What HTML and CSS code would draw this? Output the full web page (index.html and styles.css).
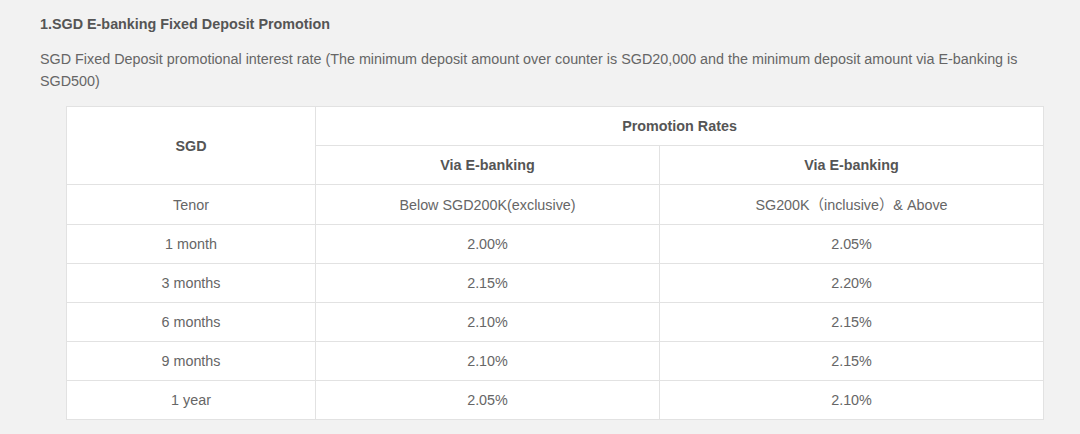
FILE: index.html
```html
<!DOCTYPE html>
<html>
<head>
<meta charset="utf-8">
<link rel="stylesheet" href="styles.css">
</head>
<body>
<div class="page">
  <h2 class="title">1.SGD E-banking Fixed Deposit Promotion</h2>
  <p class="desc">SGD Fixed Deposit promotional interest rate (The minimum deposit amount over counter is SGD20,000 and the minimum deposit amount via E-banking is SGD500)</p>
  <table class="rates">
    <colgroup>
      <col class="c1">
      <col class="c2">
      <col class="c3">
    </colgroup>
    <tr>
      <th rowspan="2">SGD</th>
      <th colspan="2">Promotion Rates</th>
    </tr>
    <tr>
      <th>Via E-banking</th>
      <th>Via E-banking</th>
    </tr>
    <tr class="tall"><td>Tenor</td><td>Below SGD200K(exclusive)</td><td>SG200K（inclusive）&amp; Above</td></tr>
    <tr><td>1 month</td><td>2.00%</td><td>2.05%</td></tr>
    <tr><td>3 months</td><td>2.15%</td><td>2.20%</td></tr>
    <tr><td>6 months</td><td>2.10%</td><td>2.15%</td></tr>
    <tr><td>9 months</td><td>2.10%</td><td>2.15%</td></tr>
    <tr><td>1 year</td><td>2.05%</td><td>2.10%</td></tr>
  </table>
</div>
</body>
</html>
```

FILE: styles.css
```css
html, body {
  margin: 0;
  padding: 0;
  background: #f2f2f2;
}
body {
  font-family: "Liberation Sans", Arial, "Noto Sans CJK SC", sans-serif;
  font-size: 14.35px;
  color: #666;
}
.page {
  padding: 13px 40px 0 40px;
  width: 1000px;
}
.title {
  margin: 0 0 13px 0;
  font-size: 14.35px;
  line-height: 22px;
  font-weight: bold;
  color: #555;
}
.desc {
  margin: 0 0 14px 0;
  line-height: 22px;
  color: #666;
  width: 990px;
}
.rates {
  margin-left: 26px;
  border-collapse: collapse;
  background: #fff;
  table-layout: fixed;
  width: 977px;
  border: 1px solid #d6d6d6;
}
.rates .c1 { width: 249px; }
.rates .c2 { width: 344px; }
.rates .c3 { width: 384px; }
.rates th, .rates td {
  border: 1px solid #e2e2e2;
  height: 38px;
  padding: 0;
  text-align: center;
  vertical-align: middle;
  font-size: 14.35px;
  line-height: 18px;
}
.rates .tall td {
  height: 39px;
}
.rates th {
  font-weight: bold;
  color: #555;
}
.rates td {
  color: #666;
}
```
